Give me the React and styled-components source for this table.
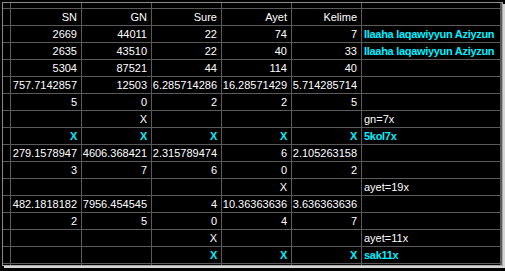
import React from "react";
import styled, { createGlobalStyle } from "styled-components";

const GlobalStyle = createGlobalStyle`
  html, body {
    margin: 0;
    padding: 0;
    background: #000000;
  }
  body {
    width: 505px;
    height: 271px;
    overflow: hidden;
  }
`;

const hl = (text) => ({ text, hl: true });
const X = hl("X");

const rows = [
  ["SN", "GN", "Sure", "Ayet", "Kelime", ""],
  ["2669", "44011", "22", "74", "7", hl("Ilaaha laqawiyyun Aziyzun")],
  ["2635", "43510", "22", "40", "33", hl("Ilaaha laqawiyyun Aziyzun")],
  ["5304", "87521", "44", "114", "40", ""],
  ["757.7142857", "12503", "6.285714286", "16.28571429", "5.714285714", ""],
  ["5", "0", "2", "2", "5", ""],
  ["", "X", "", "", "", "gn=7x"],
  [X, X, X, X, X, hl("5kol7x")],
  ["279.1578947", "4606.368421", "2.315789474", "6", "2.105263158", ""],
  ["3", "7", "6", "0", "2", ""],
  ["", "", "", "X", "", "ayet=19x"],
  ["482.1818182", "7956.454545", "4", "10.36363636", "3.636363636", ""],
  ["2", "5", "0", "4", "7", ""],
  ["", "", "X", "", "", "ayet=11x"],
  ["", "", X, X, X, hl("sak11x")],
];

const Frame = styled.div`
  margin: 2px 0 0 2px;
  width: 499px;
  border-left: 1px solid #8a8a8a;
  border-top: 1px solid #8a8a8a;
  border-right: 1px solid #a8a8a8;
  border-bottom: 1px solid #a8a8a8;
  box-shadow: 2px 2px 0 #d4d4d4;
`;

const Sheet = styled.div`
  display: grid;
  grid-template-columns: 7px 70px 69px 69px 69px 69px 138px;
  grid-template-rows: 5px repeat(15, 16px) 1px;
  gap: 1px;
  padding-right: 1px;
  background: #5a5a5a;
  font-family: "Liberation Sans", Arial, sans-serif;
  font-size: 11px;
  line-height: 16px;
`;

const Cell = styled.div`
  background: #000000;
  color: ${(p) => (p.$hl ? "#00f0ff" : "#ffffff")};
  font-weight: ${(p) => (p.$hl ? 700 : 400)};
  letter-spacing: ${(p) => (p.$hl ? "-0.3px" : "0")};
  text-align: ${(p) => (p.$left ? "left" : "right")};
  padding: ${(p) => (p.$left ? "0 0 0 2px" : "0 4px 0 0")};
  white-space: nowrap;
  overflow: hidden;
`;

const Edge = styled.div`
  background: #000000;
`;

export default function App() {
  return (
    <>
      <GlobalStyle />
      <Frame>
        <Sheet>
          {Array.from({ length: 7 }, (_, i) => (
            <Edge key={"top" + i} />
          ))}
          {rows.map((row, r) => (
            <React.Fragment key={r}>
              <Edge />
              {row.map((v, c) => {
                const isObj = typeof v === "object";
                return (
                  <Cell key={c} $hl={isObj} $left={c === 5}>
                    {isObj ? v.text : v}
                  </Cell>
                );
              })}
            </React.Fragment>
          ))}
          {Array.from({ length: 7 }, (_, i) => (
            <Edge key={"bot" + i} />
          ))}
        </Sheet>
      </Frame>
    </>
  );
}
